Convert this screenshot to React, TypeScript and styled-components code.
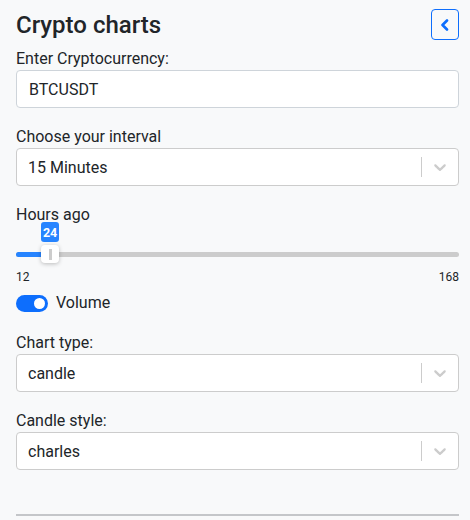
import React from 'react'
import styled, {createGlobalStyle} from 'styled-components'

const GlobalStyle = createGlobalStyle`
    body {
        margin: 0;
        background: #f8f9fa;
        font-family: "Segoe UI", Roboto, "Liberation Sans", sans-serif;
        color: #212529;
    }
`

const Panel = styled.div`
    width: 443px;
    padding: 9px 0 0 16px;
    display: flex;
    flex-direction: column;
`
const Header = styled.div`
    display: flex;
    justify-content: space-between;
    align-items: flex-start;
    height: 35px;
`
const Title = styled.h1`
    margin: 0;
    padding-top: 3px;
    font-size: 24px;
    font-weight: 500;
    line-height: 26px;
`
const CollapseButton = styled.button`
    width: 28px;
    height: 31px;
    padding: 0;
    border: 1px solid #0d6efd;
    border-radius: 4px;
    background: transparent;
    color: #0d6efd;
    display: flex;
    align-items: center;
    justify-content: center;
`
const Field = styled.div`
    display: flex;
    flex-direction: column;
    margin-top: ${(p: {$top: number}) => p.$top}px;
`
const Label = styled.label`
    font-size: 16px;
    line-height: 22px;
    margin-bottom: 0;
`
const TextInput = styled.div`
    height: 36px;
    border: 1px solid #ced4da;
    border-radius: 4px;
    background: #fff;
    padding: 0 12px;
    display: flex;
    align-items: center;
    font-size: 16px;
`
const SelectBox = styled.div`
    height: 36px;
    border: 1px solid #ccc;
    border-radius: 4px;
    background: #fff;
    display: flex;
    align-items: center;
    font-size: 16px;
`
const SelectValue = styled.div`
    flex: 1;
    padding: 0 11px;
`
const Separator = styled.span`
    width: 1px;
    height: 20px;
    background: #ccc;
`
const Indicator = styled.div`
    padding: 0 8px;
    display: flex;
    color: #ccc;
`
const SliderWrap = styled.div`
    position: relative;
    height: 44px;
    margin-top: -3px;
`
const Track = styled.div`
    position: absolute;
    left: 0;
    right: 0;
    top: 29px;
    height: 5px;
    border-radius: 3px;
    background: #ccc;
`
const TrackFill = styled.div`
    height: 100%;
    border-radius: 3px;
    background: #2684ff;
`
const Thumb = styled.div`
    position: absolute;
    top: 22px;
    width: 18px;
    height: 18px;
    margin-left: -9px;
    background: #fff;
    border-radius: 4px;
    box-shadow: 0 1px 4px rgba(0,0,0,0.25);
    display: flex;
    align-items: center;
    justify-content: center;
    &::after {
        content: "";
        width: 3px;
        height: 11px;
        background: #ccc;
    }
`
const Badge = styled.div`
    position: absolute;
    top: -1px;
    width: 18px;
    height: 20px;
    margin-left: -9px;
    border-radius: 3px;
    background: #2684ff;
    color: #fff;
    font-size: 12.5px;
    font-weight: 700;
    display: flex;
    align-items: center;
    justify-content: center;
`
const Bounds = styled.div`
    display: flex;
    justify-content: space-between;
    margin-top: 2px;
    font-size: 12px;
    line-height: 16px;
`
const SwitchRow = styled.div`
    display: flex;
    align-items: center;
    gap: 8px;
    margin-top: 6px;
    font-size: 16px;
    line-height: 24px;
`
const Switch = styled.span`
    width: 32px;
    height: 17px;
    border-radius: 9px;
    background: #0d6efd;
    display: flex;
    align-items: center;
    justify-content: flex-end;
    padding: 0 3px;
    box-sizing: border-box;
    &::after {
        content: "";
        width: 11px;
        height: 11px;
        border-radius: 50%;
        background: #fff;
    }
`
const Rule = styled.hr`
    margin: 44px 0 0;
    border: 0;
    border-top: 2px solid #c4c6c9;
`

const Chevron = () => (
    <svg width="20" height="20" viewBox="0 0 20 20" fill="currentColor">
        <path d="M4.516 7.548c0.436-0.446 1.043-0.481 1.576 0l3.908 3.747 3.908-3.747c0.533-0.481 1.141-0.446 1.574 0 0.436 0.445 0.408 1.197 0 1.615-0.406 0.418-4.695 4.502-4.695 4.502-0.217 0.223-0.502 0.335-0.787 0.335s-0.57-0.112-0.789-0.335c0 0-4.287-4.084-4.695-4.502s-0.436-1.17 0-1.615z"/>
    </svg>
)

function Select(props: {value: string}) {
    return (
        <SelectBox>
            <SelectValue>{props.value}</SelectValue>
            <Separator/>
            <Indicator><Chevron/></Indicator>
        </SelectBox>
    )
}

export default function App() {
    const min = 12
    const max = 168
    const hours = 24
    const pct = ((hours - min) / (max - min)) * 100
    return (
        <>
            <GlobalStyle/>
            <Panel>
                <Header>
                    <Title>Crypto charts</Title>
                    <CollapseButton>
                        <svg width="10" height="12" viewBox="0 0 10 12">
                            <polyline points="7,1.5 2.5,6 7,10.5" fill="none" stroke="currentColor" strokeWidth="2.6" strokeLinecap="round" strokeLinejoin="round"/>
                        </svg>
                    </CollapseButton>
                </Header>
                <Field $top={4}>
                    <Label>Enter Cryptocurrency:</Label>
                    <TextInput>BTCUSDT</TextInput>
                </Field>
                <Field $top={18}>
                    <Label>Choose your interval</Label>
                    <Select value="15 Minutes"/>
                </Field>
                <Field $top={18}>
                    <Label>Hours ago</Label>
                    <SliderWrap>
                        <Track><TrackFill style={{width: `${pct}%`}}/></Track>
                        <Badge style={{left: `${pct}%`}}>{hours}</Badge>
                        <Thumb style={{left: `${pct}%`}}/>
                    </SliderWrap>
                    <Bounds><span>{min}</span><span>{max}</span></Bounds>
                </Field>
                <SwitchRow><Switch/>Volume</SwitchRow>
                <Field $top={17}>
                    <Label>Chart type:</Label>
                    <Select value="candle"/>
                </Field>
                <Field $top={18}>
                    <Label>Candle style:</Label>
                    <Select value="charles"/>
                </Field>
                <Rule/>
            </Panel>
        </>
    )
}
